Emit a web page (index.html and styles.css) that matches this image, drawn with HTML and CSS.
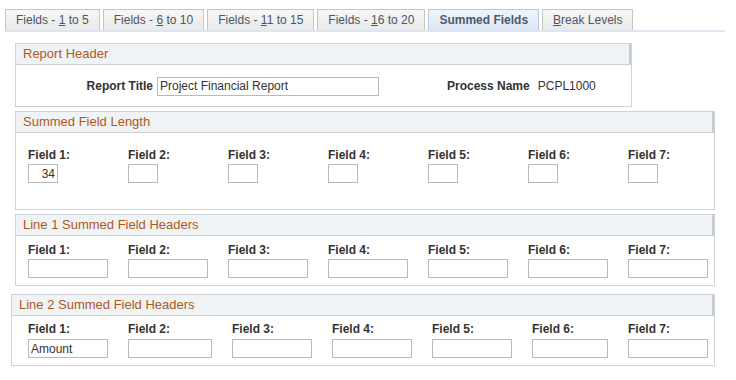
FILE: index.html
```html
<!DOCTYPE html>
<html lang="en">
<head>
  <meta charset="UTF-8" />
  <title>Summed Fields</title>
  <link rel="stylesheet" href="styles.css">
</head>
<body>
  <div class="page">
    <div class="tabs">
      <div class="tab">Fields - <u>1</u> to 5</div>
      <div class="tab">Fields - <u>6</u> to 10</div>
      <div class="tab">Fields - <u>1</u>1 to 15</div>
      <div class="tab">Fields - <u>1</u>6 to 20</div>
      <div class="tab active">Summed Fields</div>
      <div class="tab"><u>B</u>reak Levels</div>
    </div>

    <div class="group group-report">
      <div class="group-head">Report Header</div>
      <div class="group-body report-row">
        <span class="label report-label">Report Title</span>
        <input class="txt title-input" type="text" value="Project Financial Report" />
        <span class="label process-label">Process Name</span>
        <span class="value">PCPL1000</span>
      </div>
    </div>

    <div class="group group-length">
      <div class="group-head">Summed Field Length</div>
      <div class="group-body fields">
        <div class="field"><div class="label">Field 1:</div><input class="txt short num" type="text" value="34" /></div>
        <div class="field"><div class="label">Field 2:</div><input class="txt short" type="text" /></div>
        <div class="field"><div class="label">Field 3:</div><input class="txt short" type="text" /></div>
        <div class="field"><div class="label">Field 4:</div><input class="txt short" type="text" /></div>
        <div class="field"><div class="label">Field 5:</div><input class="txt short" type="text" /></div>
        <div class="field"><div class="label">Field 6:</div><input class="txt short" type="text" /></div>
        <div class="field"><div class="label">Field 7:</div><input class="txt short" type="text" /></div>
      </div>
    </div>

    <div class="group group-line1">
      <div class="group-head">Line 1 Summed Field Headers</div>
      <div class="group-body fields">
        <div class="field"><div class="label">Field 1:</div><input class="txt" type="text" /></div>
        <div class="field"><div class="label">Field 2:</div><input class="txt" type="text" /></div>
        <div class="field"><div class="label">Field 3:</div><input class="txt" type="text" /></div>
        <div class="field"><div class="label">Field 4:</div><input class="txt" type="text" /></div>
        <div class="field"><div class="label">Field 5:</div><input class="txt" type="text" /></div>
        <div class="field"><div class="label">Field 6:</div><input class="txt" type="text" /></div>
        <div class="field"><div class="label">Field 7:</div><input class="txt" type="text" /></div>
      </div>
    </div>

    <div class="group group-line2">
      <div class="group-head">Line 2 Summed Field Headers</div>
      <div class="group-body fields fields-line2">
        <div class="field"><div class="label">Field 1:</div><input class="txt" type="text" value="Amount" /></div>
        <div class="field"><div class="label">Field 2:</div><input class="txt wide" type="text" /></div>
        <div class="field"><div class="label">Field 3:</div><input class="txt" type="text" /></div>
        <div class="field"><div class="label">Field 4:</div><input class="txt" type="text" /></div>
        <div class="field"><div class="label">Field 5:</div><input class="txt" type="text" /></div>
        <div class="field"><div class="label">Field 6:</div><input class="txt narrow" type="text" /></div>
        <div class="field"><div class="label">Field 7:</div><input class="txt" type="text" /></div>
      </div>
    </div>
  </div>
</body>
</html>
```

FILE: styles.css
```css
body {
  margin: 0;
  font-family: "Liberation Sans", Arial, sans-serif;
  font-size: 12px;
  color: #333;
  background: #fff;
}
.page {
  padding: 9px 0 0 0;
}
.tabs {
  display: flex;
  gap: 3px;
  margin-left: 5px;
  width: 720px;
  border-bottom: 2px solid #dce6f2;
}
.tab {
  height: 20px;
  line-height: 20px;
  padding: 0 10px;
  border: 1px solid #c6c6c6;
  border-bottom: none;
  background: linear-gradient(#f7f7f7, #e9e9e9);
  color: #4a5666;
  white-space: nowrap;
}
.tab.active {
  background: linear-gradient(#eef4fb, #dde8f5);
  border-color: #b7c8da;
  font-weight: bold;
  color: #4b5a6c;
  padding: 0 10px;
}
.group {
  border: 1px solid #cfd3d7;
  margin-left: 15px;
  width: 698px;
}
.group-head {
  height: 20px;
  line-height: 20px;
  padding-left: 7px;
  font-size: 13px;
  color: #b0581c;
  background: #eff3f5;
  border-bottom: 1px solid #cbd0d5;
  border-right: 2px solid #c7ccd1;
}
.group-report {
  width: 615px;
  margin-top: 11px;
}
.group-length {
  margin-top: 4px;
}
.group-line1 {
  margin-top: 4px;
}
.group-line2 {
  margin-top: 8px;
  margin-left: 11px;
  width: 702px;
}
.report-row {
  display: flex;
  align-items: center;
  height: 41px;
  padding-top: 1px;
  box-sizing: border-box;
}
.label {
  font-weight: bold;
  color: #333;
  line-height: 14px;
}
.report-label {
  width: 137px;
  text-align: right;
  margin-right: 4px;
}
.process-label {
  margin-left: 68px;
}
.value {
  margin-left: 8px;
}
.txt {
  box-sizing: border-box;
  width: 80px;
  height: 19px;
  margin: 0;
  padding: 0 2px;
  border: 1px solid #b9b9b9;
  font-family: "Liberation Sans", Arial, sans-serif;
  font-size: 12px;
  color: #333;
  background: #fff;
}
.title-input {
  width: 222px;
}
.txt.short {
  width: 30px;
}
.txt.num {
  text-align: right;
}
.txt.wide {
  width: 84px;
}
.txt.narrow {
  width: 76px;
}
.fields {
  display: grid;
  grid-template-columns: repeat(6, 100px) 80px;
  padding: 7px 0 7px 12px;
}
.field .label {
  margin-bottom: 2px;
}
.group-length .fields {
  padding-top: 15px;
  padding-bottom: 26px;
}
.fields-line2 {
  grid-template-columns: 100px 104px 100px 100px 100px 96px 80px;
  padding-top: 6px;
  padding-left: 16px;
}
.fields-line2 .field .label {
  margin-bottom: 3px;
}
```
